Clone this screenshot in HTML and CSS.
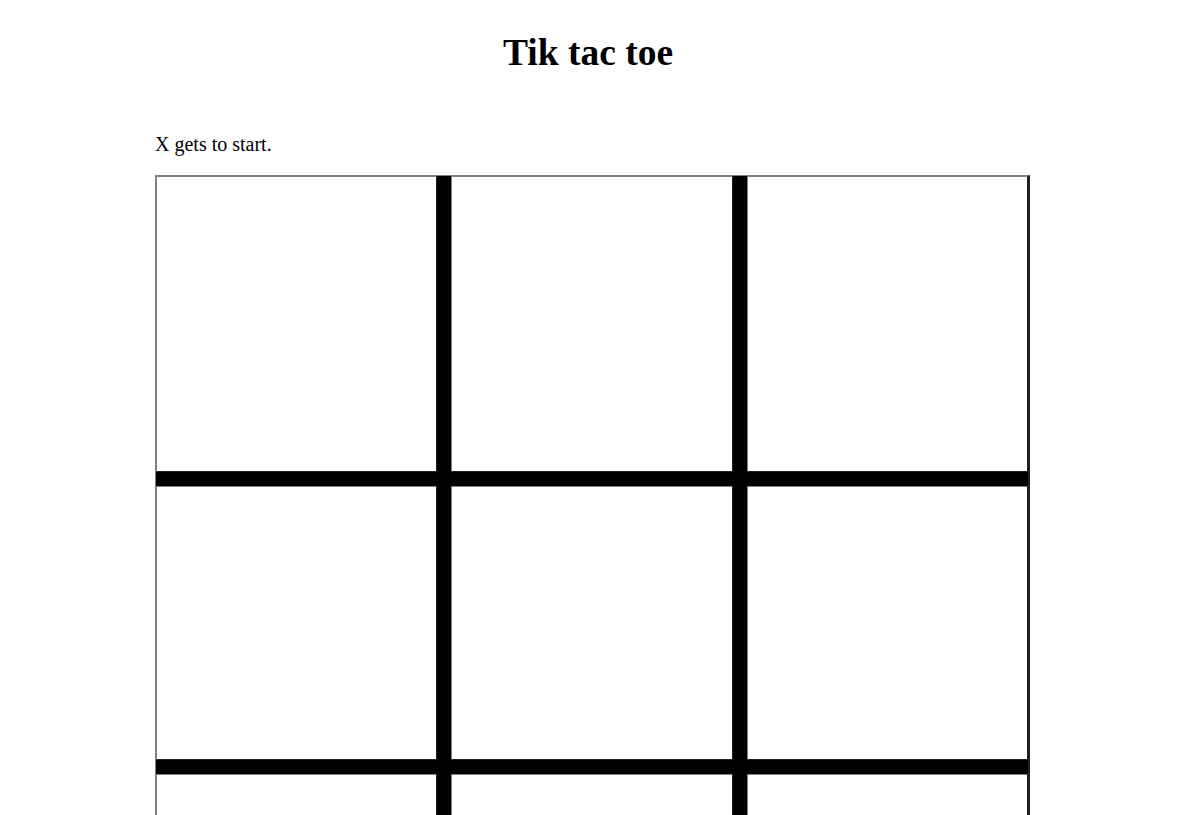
FILE: index.html
```html
<!DOCTYPE html>
<html lang="en">
<head>
<meta charset="utf-8">
<title>Tik tac toe</title>
<link rel="stylesheet" href="styles.css">
</head>
<body>
  <h1 class="title">Tik tac toe</h1>
  <main class="game">
    <p class="status">X gets to start.</p>
    <div class="board">
      <div class="cell"></div>
      <div class="cell"></div>
      <div class="cell"></div>
      <div class="cell"></div>
      <div class="cell"></div>
      <div class="cell"></div>
      <div class="cell"></div>
      <div class="cell"></div>
      <div class="cell"></div>
    </div>
  </main>
</body>
</html>
```
FILE: styles.css
```css
html {
  overflow: hidden;
}
body {
  margin: 0;
  font-family: "Liberation Serif", "Times New Roman", serif;
  color: #000;
  background: #fff;
}
.title {
  margin: 0;
  padding: 32px 16px 0 0;
  font-size: 37.5px;
  font-weight: bold;
  line-height: 41px;
  text-align: center;
}
.game {
  padding: 60px 0 0 155px;
}
.status {
  margin: 0;
  font-size: 20px;
  line-height: 22px;
}
.board {
  margin-top: 20px;
  width: 872px;
  display: grid;
  grid-template-columns: 281px 282px 281px;
  grid-template-rows: 296px 274px 274px;
  gap: 14px;
  background: #000;
  border-top: 1px solid #808080;
  border-left: 1px solid #808080;
  border-right: 2px solid #1f1f1f;
}
.cell {
  background: #fff;
  border-top: 1px solid #808080;
  border-left: 1px solid #808080;
  border-right: 1px solid #1f1f1f;
  border-bottom: 1px solid #1f1f1f;
}
```
